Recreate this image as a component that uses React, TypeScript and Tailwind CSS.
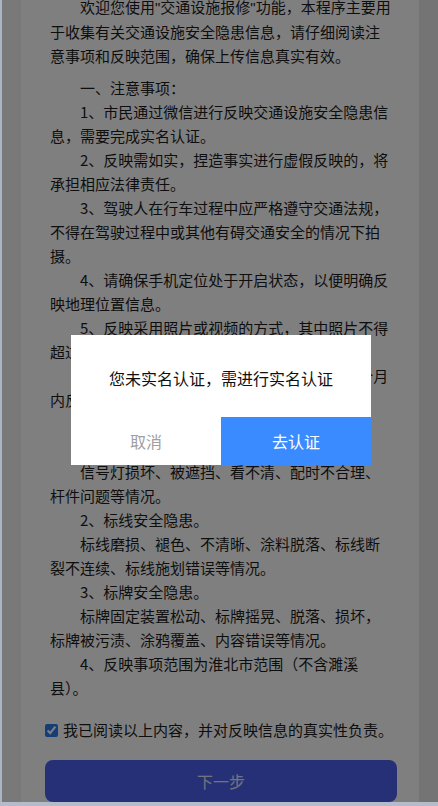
import React from 'react';

const Quote = () => <span style={{ fontFamily: '"Liberation Sans", sans-serif' }}>"</span>;

const notes = [
  '一、注意事项：',
  '1、市民通过微信进行反映交通设施安全隐患信息，需要完成实名认证。',
  '2、反映需如实，捏造事实进行虚假反映的，将承担相应法律责任。',
  '3、驾驶人在行车过程中应严格遵守交通法规，不得在驾驶过程中或其他有碍交通安全的情况下拍摄。',
  '4、请确保手机定位处于开启状态，以便明确反映地理位置信息。',
  '5、反映采用照片或视频的方式，其中照片不得超过3张，视频不超过15秒。',
  '6、所反映问题经核实后，处理结果将在一个月内反馈。',
  '二、反映范围：',
  '1、信号灯安全隐患。',
  '信号灯损坏、被遮挡、看不清、配时不合理、杆件问题等情况。',
  '2、标线安全隐患。',
  '标线磨损、褪色、不清晰、涂料脱落、标线断裂不连续、标线施划错误等情况。',
  '3、标牌安全隐患。',
  '标牌固定装置松动、标牌摇晃、脱落、损坏，标牌被污渍、涂鸦覆盖、内容错误等情况。',
  '4、反映事项范围为淮北市范围（不含濉溪县）。',
];

const App = () => {
  return (
    <div
      className="relative h-[806px] w-[438px] overflow-hidden bg-[#f3f3f3] text-[#1c1c1c]"
      style={{ fontFamily: '"Noto Sans CJK SC", "Noto Sans", sans-serif' }}
    >
      <div className="flex h-full">
        {/* page card */}
        <div className="ml-[21px] flex w-[398px] flex-col bg-white">
          <div className="-mt-[5px] pl-[29px] pr-[25px] text-[15px] leading-[24px]">
            <p className="mb-[8px] indent-[30px]">
              欢迎您使用<Quote />交通设施报修<Quote />功能，本程序主要用于收集有关交通设施安全隐患信息，请仔细阅读注意事项和反映范围，确保上传信息真实有效。
            </p>
            {notes.map((n, i) => (
              <p key={i} className="indent-[30px]">
                {n}
              </p>
            ))}
          </div>

          <label className="mt-[18px] flex items-center pl-[24px] text-[15px] leading-[24px]">
            <input type="checkbox" defaultChecked className="h-[13px] w-[13px] accent-[#2a7cf0]" />
            <span className="ml-[5px]">我已阅读以上内容，并对反映信息的真实性负责。</span>
          </label>

          <div className="mt-[18px] pl-[24px] pr-[22px]">
            <button className="h-[42px] w-full rounded-[8px] bg-[#4a60ee] text-[16px] text-white/85">
              下一步
            </button>
          </div>
        </div>
        <div className="flex-1 bg-[#e9e9e9]" />
      </div>

      {/* mask */}
      <div className="absolute inset-0 bg-black/50" />

      {/* dialog */}
      <div className="absolute left-[71px] top-[335px] w-[300px] bg-white">
        <div className="pt-[31px] pb-[27px] text-center text-[16px] leading-[24px] text-[#111]">
          您未实名认证，需进行实名认证
        </div>
        <div className="flex h-[48px]">
          <button className="flex-1 text-[16px] text-[#a0a0a0]">取消</button>
          <button className="flex-1 bg-[#3a8bff] text-[16px] text-white">去认证</button>
        </div>
      </div>

      {/* window frame */}
      <div className="absolute left-0 top-0 h-full w-[2px] bg-[#aab4c8]" />
      <div className="absolute bottom-0 left-0 h-[4px] w-full bg-[#b4bccb]" />
    </div>
  );
};

export default App;
